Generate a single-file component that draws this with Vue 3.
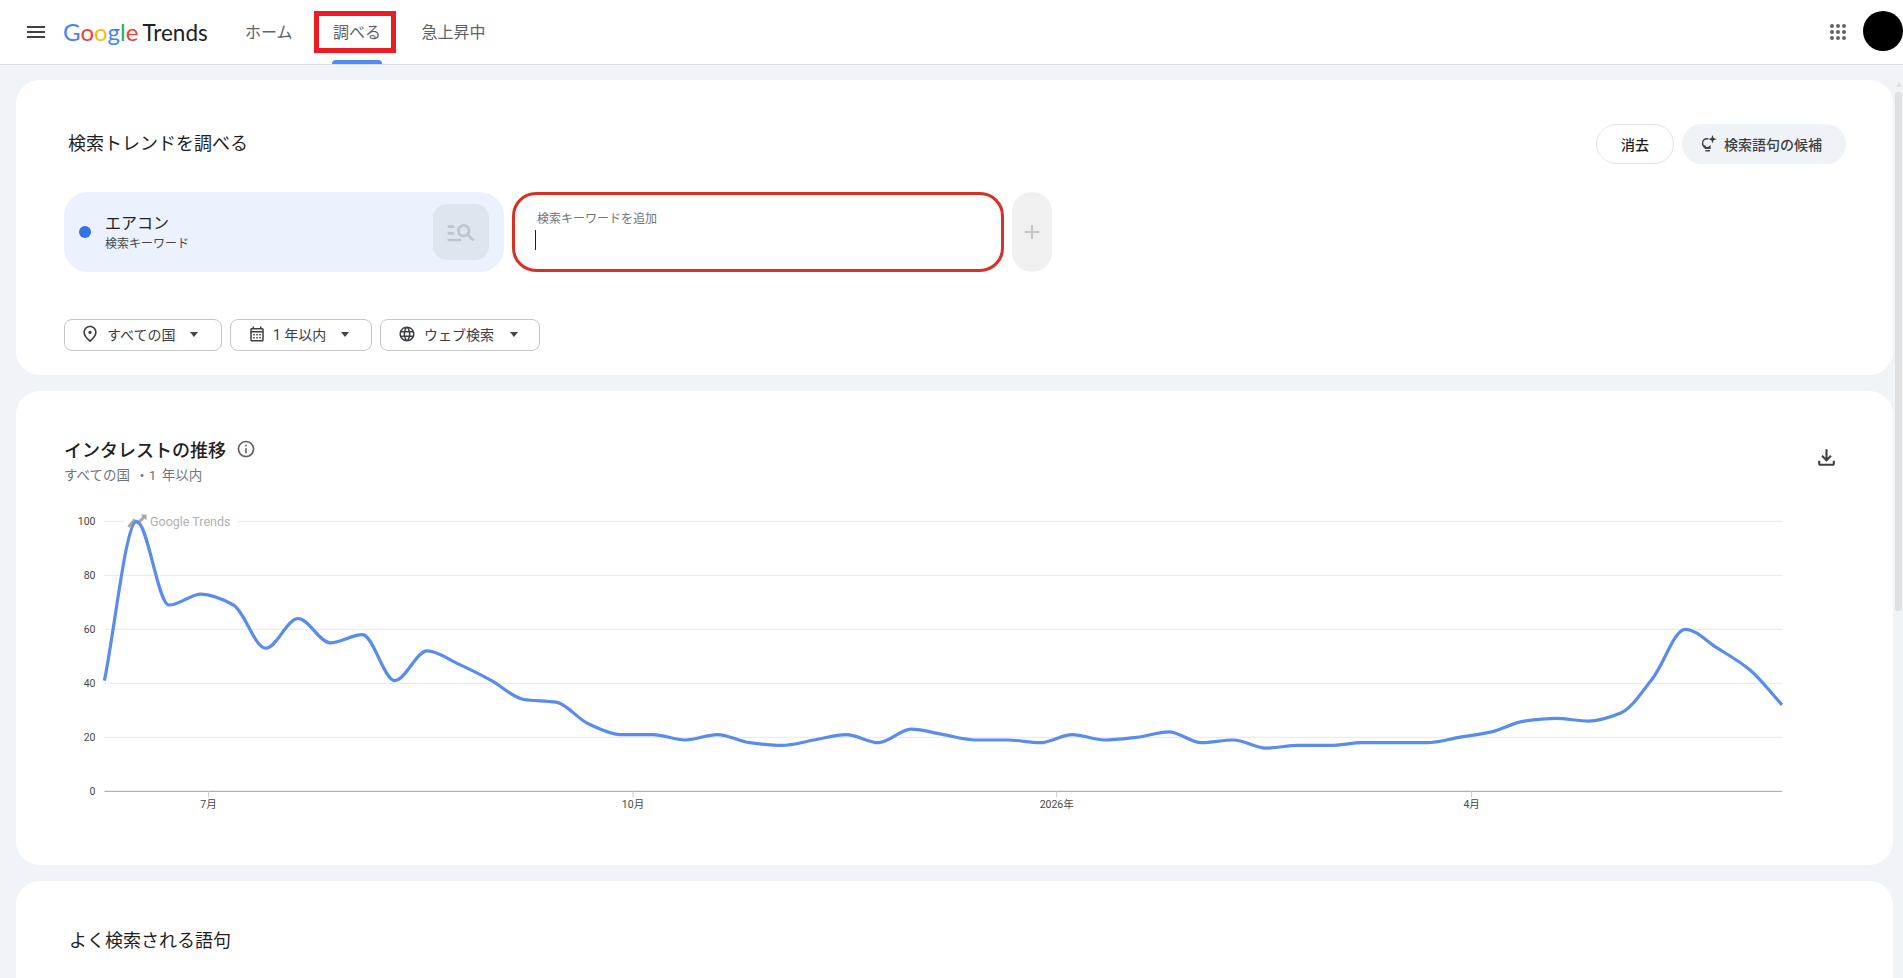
<template>
  <div class="page">
    <header class="topbar">
      <button class="menu-btn" aria-label="menu">
        <svg width="24" height="24" viewBox="0 0 24 24"><path fill="#3c4043" d="M3 18h18v-2H3v2zm0-5h18v-2H3v2zm0-7v2h18V6H3z" /></svg>
      </button>
      <div class="logo">
        <span class="g-blue">G</span><span class="g-red">o</span><span class="g-yellow">o</span><span class="g-blue">g</span><span class="g-green">l</span><span class="g-red">e</span>
        <span class="logo-trends">Trends</span>
      </div>
      <nav class="nav">
        <a
          v-for="item in navItems"
          :key="item.label"
          class="nav-item"
          :class="{ active: item.active }"
          href="#"
        >
          {{ item.label }}
          <span v-if="item.active" class="nav-highlight"></span>
        </a>
      </nav>
      <div class="topbar-right">
        <svg width="24" height="24" viewBox="0 0 24 24" fill="#5f6368">
          <template v-for="cy in [6, 12, 18]" :key="cy">
            <circle v-for="cx in [6, 12, 18]" :key="cx" :cx="cx" :cy="cy" r="2" />
          </template>
        </svg>
        <div class="avatar"></div>
      </div>
    </header>

    <main class="content">
      <section class="card search-card">
        <div class="search-head">
          <h2 class="card-title">検索トレンドを調べる</h2>
          <div class="search-actions">
            <button class="btn-clear">消去</button>
            <button class="btn-suggest">
              <svg width="18" height="18" viewBox="0 0 24 24" fill="none" stroke="#3c4043" stroke-width="2">
                <path d="M12.5 5.2A6 6 0 1 0 14.5 15.5V17.5H8.5V15.5A6 6 0 0 1 7 14" />
                <path d="M8.5 21h6" />
                <path fill="#3c4043" stroke="none" d="M18 0l1.5 4L23.5 5.5l-4 1.5L18 11l-1.5-4L12.5 5.5l4-1.5z" />
              </svg>
              検索語句の候補
            </button>
          </div>
        </div>

        <div class="search-row">
          <div class="term-chip">
            <span class="term-dot"></span>
            <div class="term-text">
              <div class="term-name">エアコン</div>
              <div class="term-sub">検索キーワード</div>
            </div>
            <div class="term-icon">
              <svg width="32" height="32" viewBox="0 0 24 24"><path fill="#bec5cf" d="M7 9H2V7h5v2zm0 3H2v2h5v-2zm13.59 7l-3.83-3.83c-.8.52-1.74.83-2.76.83-2.76 0-5-2.24-5-5s2.24-5 5-5 5 2.24 5 5c0 1.02-.31 1.96-.83 2.75L22 17.59 20.59 19zM17 11c0-1.65-1.35-3-3-3s-3 1.35-3 3 1.35 3 3 3 3-1.35 3-3zM2 19h10v-2H2v2z" /></svg>
            </div>
          </div>
          <div class="term-input">
            <div class="input-label">検索キーワードを追加</div>
            <div class="input-caret"></div>
          </div>
          <button class="add-btn" aria-label="add">
            <svg width="14" height="14" viewBox="0 0 14 14"><path fill="#c6c6c6" d="M6 0h2v6h6v2H8v6H6V8H0V6h6z" /></svg>
          </button>
        </div>

        <div class="filters">
          <button class="filter filter-geo">
            <svg width="20" height="20" viewBox="0 0 24 24"><path fill="#3c4043" d="M12 12c-1.1 0-2-.9-2-2s.9-2 2-2 2 .9 2 2-.9 2-2 2zm6-1.8C18 6.57 15.35 4 12 4s-6 2.57-6 6.2c0 2.34 1.95 5.44 6 9.14 4.05-3.7 6-6.8 6-9.14zM12 2c4.2 0 8 3.22 8 8.2 0 3.32-2.67 7.25-8 11.8-5.33-4.55-8-8.48-8-11.8C4 5.22 7.8 2 12 2z" /></svg>
            <span>すべての国</span>
            <i class="caret"></i>
          </button>
          <button class="filter filter-date">
            <svg width="18" height="18" viewBox="0 0 24 24"><path fill="#3c4043" d="M19 4h-1V2h-2v2H8V2H6v2H5c-1.1 0-2 .9-2 2v14c0 1.1.9 2 2 2h14c1.1 0 2-.9 2-2V6c0-1.1-.9-2-2-2zm0 16H5V10h14v10zm0-12H5V6h14v2zM9 14H7v-2h2v2zm4 0h-2v-2h2v2zm4 0h-2v-2h2v2zm-8 4H7v-2h2v2zm4 0h-2v-2h2v2zm4 0h-2v-2h2v2z" /></svg>
            <span>1 年以内</span>
            <i class="caret"></i>
          </button>
          <button class="filter filter-type">
            <svg width="18" height="18" viewBox="0 0 24 24"><path fill="#3c4043" d="M11.99 2C6.47 2 2 6.48 2 12s4.47 10 9.99 10C17.52 22 22 17.52 22 12S17.52 2 11.99 2zm6.93 6h-2.95c-.32-1.25-.78-2.45-1.38-3.56 1.84.63 3.37 1.91 4.33 3.56zM12 4.04c.83 1.2 1.48 2.53 1.91 3.96h-3.82c.43-1.43 1.08-2.76 1.91-3.96zM4.26 14C4.1 13.36 4 12.69 4 12s.1-1.36.26-2h3.38c-.08.66-.14 1.32-.14 2s.06 1.34.14 2H4.26zm.82 2h2.95c.32 1.25.78 2.45 1.38 3.56-1.84-.63-3.37-1.9-4.33-3.56zm2.95-8H5.08c.96-1.66 2.49-2.93 4.33-3.56C8.81 5.55 8.35 6.75 8.03 8zM12 19.96c-.83-1.2-1.48-2.53-1.91-3.96h3.82c-.43 1.43-1.08 2.76-1.91 3.96zM14.34 14H9.66c-.09-.66-.16-1.32-.16-2s.07-1.35.16-2h4.68c.09.65.16 1.32.16 2s-.07 1.34-.16 2zm.25 5.56c.6-1.11 1.06-2.31 1.38-3.56h2.95c-.96 1.65-2.49 2.93-4.33 3.56zM16.36 14c.08-.66.14-1.32.14-2s-.06-1.34-.14-2h3.38c.16.64.26 1.31.26 2s-.1 1.36-.26 2h-3.38z" /></svg>
            <span>ウェブ検索</span>
            <i class="caret"></i>
          </button>
        </div>
      </section>

      <section class="card chart-card">
        <div class="chart-head">
          <div>
            <div class="chart-title-row">
              <h2 class="chart-title">インタレストの推移</h2>
              <svg width="20" height="20" viewBox="0 0 24 24"><path fill="#5f6368" d="M11 7h2v2h-2zm0 4h2v6h-2zm1-9C6.48 2 2 6.48 2 12s4.48 10 10 10 10-4.48 10-10S17.52 2 12 2zm0 18c-4.41 0-8-3.59-8-8s3.59-8 8-8 8 3.59 8 8-3.59 8-8 8z" /></svg>
            </div>
            <div class="chart-sub">すべての国 ・1 年以内</div>
          </div>
          <svg class="download" width="25" height="25" viewBox="0 0 24 24"><path fill="#3c4043" d="M18 15v3H6v-3H4v3c0 1.1.9 2 2 2h12c1.1 0 2-.9 2-2v-3h-2zm-1-4l-1.41-1.41L13 12.17V4h-2v8.17L8.41 9.59 7 11l5 5 5-5z" /></svg>
        </div>

        <!-- viewBox uses page coordinates, easier to read off the chart -->
        <svg class="chart" width="1730" height="320" viewBox="65 505 1730 320">
          <g v-for="tick in yTicks" :key="tick">
            <line :x1="plot.left" :x2="plot.right" :y1="yPos(tick)" :y2="yPos(tick)" :stroke="tick === 0 ? '#9e9e9e' : '#e8e8e8'" stroke-width="1" />
            <text class="axis-text" :x="95.5" :y="yPos(tick) + 4" text-anchor="end">{{ tick }}</text>
          </g>
          <g v-for="m in months" :key="m.label">
            <line :x1="m.x" :x2="m.x" :y1="plot.bottom" :y2="plot.bottom + 6" stroke="#cccccc" />
            <text class="axis-text" :x="m.x" :y="808" text-anchor="middle">{{ m.label }}</text>
          </g>

          <!-- watermark sits on top of the 100 gridline -->
          <rect x="124" y="512" width="113" height="18" fill="#ffffff" />
          <path d="M128.5 527L134 520.5L138 523L144 517" fill="none" stroke="#a8a8a8" stroke-width="3" />
          <path d="M140.5 514.5H146.5V520.5z" fill="#a8a8a8" />
          <text class="watermark" x="150" y="525.5">Google Trends</text>

          <path :d="linePath" fill="none" stroke="#5a8cee" stroke-width="3.2" stroke-linejoin="round" />
        </svg>
      </section>

      <section class="card queries-card">
        <h2 class="card-title">よく検索される語句</h2>
      </section>
    </main>

    <div class="scrollbar">
      <span class="scroll-arrow"></span>
      <span class="scroll-thumb"></span>
    </div>
  </div>
</template>

<script setup>
import { computed } from "vue";

const navItems = [
  { label: "ホーム" },
  { label: "調べる", active: true },
  { label: "急上昇中" },
];

const plot = { left: 104.4, right: 1782, top: 521.3, bottom: 791.3 };
const yTicks = [100, 80, 60, 40, 20, 0];
const months = [
  { label: "7月", x: 208.5 },
  { label: "10月", x: 633 },
  { label: "2026年", x: 1056.7 },
  { label: "4月", x: 1471.6 },
];

const values = [
  41, 100, 69, 73, 69, 53, 64, 55, 58, 41, 52, 47, 41, 34, 33, 25, 21, 21, 19,
  21, 18, 17, 19, 21, 18, 23, 21, 19, 19, 18, 21, 19, 20, 22, 18, 19, 16, 17,
  17, 18, 18, 18, 20, 22, 26, 27, 26, 29, 42, 60, 53, 45, 32,
];

const yPos = (v) => plot.bottom - (v / 100) * (plot.bottom - plot.top);

// monotone cubic, same shape the trends line has (no overshoot at the peaks)
const linePath = computed(() => {
  const step = (plot.right - plot.left) / (values.length - 1);
  const pts = values.map((v, i) => [plot.left + i * step, yPos(v)]);
  const slopes = pts.slice(1).map((p, i) => (p[1] - pts[i][1]) / step);
  const tangents = pts.map((p, i) => {
    if (i === 0) return slopes[0];
    if (i === pts.length - 1) return slopes[i - 1];
    const a = slopes[i - 1];
    const b = slopes[i];
    if (a * b <= 0) return 0;
    return (2 * a * b) / (a + b);
  });
  let d = `M${pts[0][0]} ${pts[0][1]}`;
  for (let i = 0; i < pts.length - 1; i++) {
    const [x0, y0] = pts[i];
    const [x1, y1] = pts[i + 1];
    const c = step / 3;
    d += `C${x0 + c} ${y0 + tangents[i] * c} ${x1 - c} ${y1 - tangents[i + 1] * c} ${x1} ${y1}`;
  }
  return d;
});
</script>

<style>
html,
body {
  margin: 0;
  overflow: hidden;
}
</style>

<style scoped>
.page {
  position: relative;
  height: 100vh;
  overflow: hidden;
  background: #f0f4f9;
  font-family: Roboto, "Noto Sans CJK JP", sans-serif;
  color: #1f1f1f;
}

.topbar {
  display: flex;
  align-items: center;
  box-sizing: border-box;
  height: 65px;
  padding-left: 24px;
  background: #fff;
  border-bottom: 1px solid #dadce0;
}

.menu-btn {
  display: flex;
  padding: 0;
  border: none;
  background: none;
}

.logo {
  width: 142px;
  margin-left: 15px;
  font-family: Lato, sans-serif;
  font-size: 24px;
  white-space: nowrap;
  padding-bottom: 2px;
}
.g-blue { color: #4285f4; }
.g-red { color: #ea4335; }
.g-yellow { color: #fbbc05; }
.g-green { color: #34a853; }
.logo-trends {
  margin-left: 4px;
  color: #202124;
  font-size: 22.5px;
}

.nav {
  display: flex;
  gap: 40.5px;
  height: 64px;
  margin-left: 40px;
}

.nav-item {
  position: relative;
  display: flex;
  align-items: center;
  padding-bottom: 2px;
  box-sizing: border-box;
  color: #5f6368;
  font-size: 16px;
  text-decoration: none;
}

.nav-item.active::after {
  content: "";
  position: absolute;
  left: -1px;
  right: -1px;
  bottom: 0;
  height: 4px;
  border-radius: 4px 4px 0 0;
  background: #4d8bf5;
}

/* red annotation box from the screenshot */
.nav-highlight {
  position: absolute;
  left: -19px;
  right: -15px;
  top: 11px;
  height: 42px;
  box-sizing: border-box;
  border: 5px solid #ed1c24;
}

.topbar-right {
  display: flex;
  align-items: center;
  gap: 13px;
  margin-left: auto;
}

.avatar {
  width: 40px;
  height: 40px;
  margin-bottom: 3px;
  border-radius: 50%;
  background: #000;
}

.content {
  display: flex;
  flex-direction: column;
  gap: 16px;
  padding: 15px 10px 0 16px;
}

.card {
  background: #fff;
  border-radius: 24px;
}

.card-title {
  margin: 0 0 0 4px;
  font-size: 18px;
  font-weight: 400;
  line-height: 24px;
}

.search-card {
  padding: 44px 47px 24px 48px;
}

.search-head {
  display: flex;
  align-items: center;
  justify-content: space-between;
}

.search-actions {
  display: flex;
  gap: 8px;
}

.search-actions button {
  display: flex;
  align-items: center;
  justify-content: center;
  box-sizing: border-box;
  height: 40px;
  border-radius: 20px;
  font-family: inherit;
  font-size: 14px;
  font-weight: 500;
}

.btn-clear {
  width: 78px;
  border: 1px solid #e0e3e7;
  background: #fff;
  color: #1f1f1f;
}

.btn-suggest {
  width: 164px;
  gap: 7px;
  padding: 0 7px 0 0;
  border: none;
  background: #eff3f8;
  color: #3c4043;
}

.search-row {
  display: flex;
  height: 80px;
  margin-top: 28px;
}

.term-chip {
  display: flex;
  align-items: center;
  box-sizing: border-box;
  width: 440px;
  padding: 0 15px;
  border-radius: 24px;
  background: #ebf1fd;
}

.term-dot {
  width: 12px;
  height: 12px;
  margin-right: 14px;
  border-radius: 50%;
  background: #3271e7;
}

.term-text {
  flex: 1;
  margin-top: 2px;
}

.term-name {
  font-size: 16px;
  line-height: 22px;
}

.term-sub {
  font-size: 12px;
  line-height: 18px;
  color: #444746;
}

.term-icon {
  display: flex;
  align-items: center;
  justify-content: center;
  width: 56px;
  height: 56px;
  border-radius: 14px;
  background: #dfe5ef;
}

.term-input {
  box-sizing: border-box;
  width: 492px;
  margin-left: 8px;
  padding: 15px 22px 0 22px;
  border: 3px solid #d93025;
  border-radius: 24px;
}

.input-label {
  font-size: 12px;
  line-height: 18px;
  color: #70757a;
}

.input-caret {
  width: 1px;
  height: 20px;
  margin: 2px 0 0 -2px;
  background: #202124;
}

.add-btn {
  display: flex;
  align-items: center;
  justify-content: center;
  width: 40px;
  margin-left: 8px;
  padding: 0;
  border: none;
  border-radius: 20px;
  background: #f0f0f0;
}

.filters {
  display: flex;
  gap: 8px;
  margin-top: 47px;
}

.filter {
  display: flex;
  align-items: center;
  box-sizing: border-box;
  height: 32px;
  padding: 0 0 2px;
  border: 1px solid #c4c7c5;
  border-radius: 8px;
  background: #fff;
  color: #3c4043;
  font-family: inherit;
  font-size: 14px;
}
.filter-geo { width: 158px; padding-left: 15px; gap: 7px; }
.filter-date { width: 142px; padding-left: 17px; gap: 7px; }
.filter-type { width: 160px; padding-left: 17px; gap: 8px; }

.caret {
  width: 0;
  height: 0;
  margin-left: 7.5px;
  border-left: 4.5px solid transparent;
  border-right: 4.5px solid transparent;
  border-top: 5px solid #444746;
}

.chart-card {
  height: 474px;
}

.chart-head {
  display: flex;
  justify-content: space-between;
  padding: 46px 54px 0 48px;
}

.chart-title-row {
  display: flex;
  align-items: center;
  gap: 10px;
  height: 24px;
}

.chart-title {
  margin: 0;
  font-size: 18px;
  font-weight: 500;
}

.chart-sub {
  margin-top: 5px;
  font-size: 13.5px;
  line-height: 18px;
  word-spacing: 2px;
  color: #70757a;
}

.download {
  margin-top: 8px;
}

.chart {
  display: block;
  margin: 21px 0 0 49px;
}

.axis-text {
  font-size: 10.5px;
  fill: #444746;
}

.watermark {
  font-size: 12.5px;
  fill: #b0b0b0;
}

.queries-card {
  height: 240px;
  padding: 48px 0 0 49px;
}

.scrollbar {
  position: absolute;
  top: 82px;
  right: 1px;
  display: flex;
  flex-direction: column;
  align-items: center;
  width: 7px;
}

.scroll-arrow {
  width: 0;
  height: 0;
  border-left: 3.5px solid transparent;
  border-right: 3.5px solid transparent;
  border-bottom: 5px solid #e0e0e0;
}

.scroll-thumb {
  width: 7px;
  height: 519px;
  margin-top: 5px;
  border-radius: 3px;
  background: #e0e0e0;
}
</style>
